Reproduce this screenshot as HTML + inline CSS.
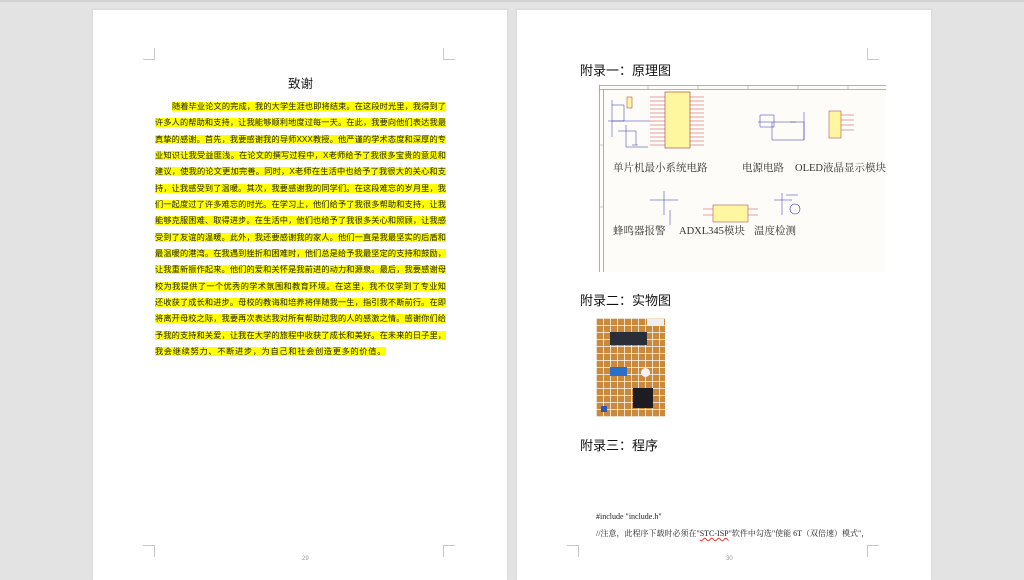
<!DOCTYPE html>
<html><head><meta charset="utf-8"><style>
*{margin:0;padding:0;box-sizing:border-box}
body{width:1024px;height:575px;background:#e3e3e3;position:relative;overflow:hidden;font-family:"Liberation Sans","Noto Sans CJK SC",sans-serif}
.top{position:absolute;left:0;top:0;width:1024px;height:2px;background:#d2d2d2}
.page{position:absolute;top:10px;height:570px;background:#fff;box-shadow:0 0 2px #ccc}
.mk{position:absolute;width:12px;height:12px;border-color:#c8c8c8;border-style:solid;border-width:0}
.t{position:absolute;white-space:nowrap;color:#222}
.para{position:absolute;left:62px;top:89px;width:291px;font-size:8.2px;line-height:16.35px;color:#222}
.para div{text-align:justify;text-align-last:justify;height:16.35px;overflow:hidden}
.para div.last{text-align:left;text-align-last:left}
.para span{background:#ffff00}
.h{position:absolute;font-size:13px;font-weight:normal;color:#111;font-family:"Liberation Sans","Noto Sans CJK SC",sans-serif}
.sl{position:absolute;font-family:"Liberation Serif","Noto Serif CJK SC",serif;font-size:10.5px;color:#333;white-space:nowrap}
</style></head><body>
<div class="top"></div>
<div class="page" style="left:93px;width:414px">
 <div class="mk" style="left:50px;top:38px;border-right-width:1px;border-bottom-width:1px"></div>
 <div class="mk" style="left:350px;top:38px;border-left-width:1px;border-bottom-width:1px"></div>
 <div class="mk" style="left:50px;top:535px;border-right-width:1px;border-top-width:1px"></div>
 <div class="mk" style="left:350px;top:535px;border-left-width:1px;border-top-width:1px"></div>
 <div class="t" style="left:195px;top:63px;font-size:12.5px">致谢</div>
 <div class="para">
  <div style="padding-left:17px"><span>随着毕业论文的完成，我的大学生涯也即将结束。在这段时光里，我得到了</span></div>
  <div><span>许多人的帮助和支持，让我能够顺利地度过每一天。在此，我要向他们表达我最</span></div>
  <div><span>真挚的感谢。首先，我要感谢我的导师XXX教授。他严谨的学术态度和深厚的专</span></div>
  <div><span>业知识让我受益匪浅。在论文的撰写过程中，X老师给予了我很多宝贵的意见和</span></div>
  <div><span>建议，使我的论文更加完善。同时，X老师在生活中也给予了我很大的关心和支</span></div>
  <div><span>持，让我感受到了温暖。其次，我要感谢我的同学们。在这段难忘的岁月里，我</span></div>
  <div><span>们一起度过了许多难忘的时光。在学习上，他们给予了我很多帮助和支持，让我</span></div>
  <div><span>能够克服困难、取得进步。在生活中，他们也给予了我很多关心和照顾，让我感</span></div>
  <div><span>受到了友谊的温暖。此外，我还要感谢我的家人。他们一直是我最坚实的后盾和</span></div>
  <div><span>最温暖的港湾。在我遇到挫折和困难时，他们总是给予我最坚定的支持和鼓励，</span></div>
  <div><span>让我重新振作起来。他们的爱和关怀是我前进的动力和源泉。最后，我要感谢母</span></div>
  <div><span>校为我提供了一个优秀的学术氛围和教育环境。在这里，我不仅学到了专业知识，</span></div>
  <div><span>还收获了成长和进步。母校的教诲和培养将伴随我一生，指引我不断前行。在即</span></div>
  <div><span>将离开母校之际，我要再次表达我对所有帮助过我的人的感激之情。感谢你们给</span></div>
  <div><span>予我的支持和关爱，让我在大学的旅程中收获了成长和美好。在未来的日子里，</span></div>
  <div class="last"><span style="letter-spacing:0.7px">我会继续努力、不断进步，为自己和社会创造更多的价值。</span></div>
 </div>
 <div class="t" style="left:209px;top:546px;font-size:6px;color:#999">29</div>
</div>

<div class="page" style="left:517px;width:414px">
 <div class="mk" style="left:350px;top:38px;border-left-width:1px;border-bottom-width:1px"></div>
 <div class="mk" style="left:50px;top:535px;border-right-width:1px;border-top-width:1px"></div>
 <div class="mk" style="left:350px;top:535px;border-left-width:1px;border-top-width:1px"></div>
 <div class="h" style="left:63px;top:50px">附录一：原理图</div>
 <svg style="position:absolute;left:81px;top:75px" width="288" height="187" viewBox="0 0 288 187">
  <rect x="0" y="0" width="288" height="187" fill="#fdfcf8"/>
  <path d="M1.5 0V187M5.5 4V187M1 4.5H288M1 0.5H288" stroke="#999" stroke-width="0.8" fill="none"/>
  <path d="M1 60H5M1 122H5M50 0V4M100 0V4M150 0V4M200 0V4M250 0V4" stroke="#999" stroke-width="0.6"/>
  <rect x="67" y="7" width="25" height="56" fill="#fff7a0" stroke="#a33" stroke-width="0.6"/>
  <rect x="29" y="12" width="5" height="11" fill="#fff7a0" stroke="#a33" stroke-width="0.5"/>
  <g stroke="#c44" stroke-width="0.5">
   <path d="M52 12H67M52 16H67M52 20H67M52 24H67M52 28H67M52 32H67M52 36H67M52 40H67M52 44H67M52 48H67M52 52H67M52 56H67M52 60H67"/>
   <path d="M92 12H106M92 16H106M92 20H106M92 24H106M92 28H106M92 32H106M92 36H106M92 40H106M92 44H106M92 48H106M92 52H106M92 56H106M92 60H106"/>
  </g>
  <g stroke="#33a" stroke-width="0.5" fill="none">
   <path d="M14 15V52M14 20H26V36H14M10 36H52M28 40V62H50M38 46V60M20 46H38M34 60H40"/>
   <path d="M160 37H198M174 37V55H206V37M206 27V55M192 37H206M162 30H176V42H162Z"/>
   <path d="M52 115H80M66 106V130M72 125V140"/>
   <path d="M176 115H194M184 108V130M188 110H200"/>
  </g>
  <rect x="231" y="26" width="12" height="27" fill="#fff7a0" stroke="#a33" stroke-width="0.5"/>
  <rect x="115" y="120" width="35" height="17" fill="#fff7a0" stroke="#a33" stroke-width="0.5"/>
  <path d="M243 30H256M243 35H256M243 40H256M243 45H256M150 124H160M150 130H160M105 124H115M105 130H115" stroke="#c44" stroke-width="0.5"/>
  <circle cx="197" cy="124" r="5" fill="none" stroke="#33a" stroke-width="0.6"/>
 </svg>
 <div class="sl" style="left:96px;top:150px">单片机最小系统电路</div>
 <div class="sl" style="left:225px;top:150px">电源电路</div>
 <div class="sl" style="left:278px;top:150px">OLED液晶显示模块</div>
 <div class="sl" style="left:96px;top:213px">蜂鸣器报警</div>
 <div class="sl" style="left:162px;top:213px">ADXL345模块</div>
 <div class="sl" style="left:237px;top:213px">温度检测</div>
 <div class="h" style="left:63px;top:280px">附录二：实物图</div>
 <div style="position:absolute;left:79px;top:308px;width:69px;height:99px;background:#c98a3e;background-image:linear-gradient(90deg,rgba(255,255,255,.7) 1px,transparent 1px),linear-gradient(rgba(255,255,255,.7) 1px,transparent 1px);background-size:7px 7px">
  <div style="position:absolute;left:14px;top:14px;width:37px;height:13px;background:#2a2e38"></div>
  <div style="position:absolute;left:51px;top:1px;width:17px;height:7px;background:#eee"></div>
  <div style="position:absolute;left:14px;top:49px;width:17px;height:9px;background:#2a6fc9"></div>
  <div style="position:absolute;left:45px;top:50px;width:9px;height:9px;border-radius:50%;background:#f2f2f2"></div>
  <div style="position:absolute;left:37px;top:70px;width:20px;height:20px;background:#1c1c22"></div>
  <div style="position:absolute;left:5px;top:88px;width:6px;height:6px;background:#2b58b8"></div>
 </div>
 <div class="h" style="left:63px;top:425px">附录三：程序</div>
 <div class="t" style="left:79px;top:502px;font-size:8px;font-family:'Liberation Serif','Noto Serif CJK SC',serif">#include "include.h"</div>
 <div class="t" style="left:79px;top:518px;font-size:8px;font-family:'Liberation Serif','Noto Serif CJK SC',serif">//注意，此程序下载时必须在"<span style="text-decoration:underline wavy #e33">STC-ISP</span>"软件中勾选"使能 6T（双倍速）模式"，</div>
 <div class="t" style="left:209px;top:546px;font-size:6px;color:#999">30</div>
</div>
</body></html>
